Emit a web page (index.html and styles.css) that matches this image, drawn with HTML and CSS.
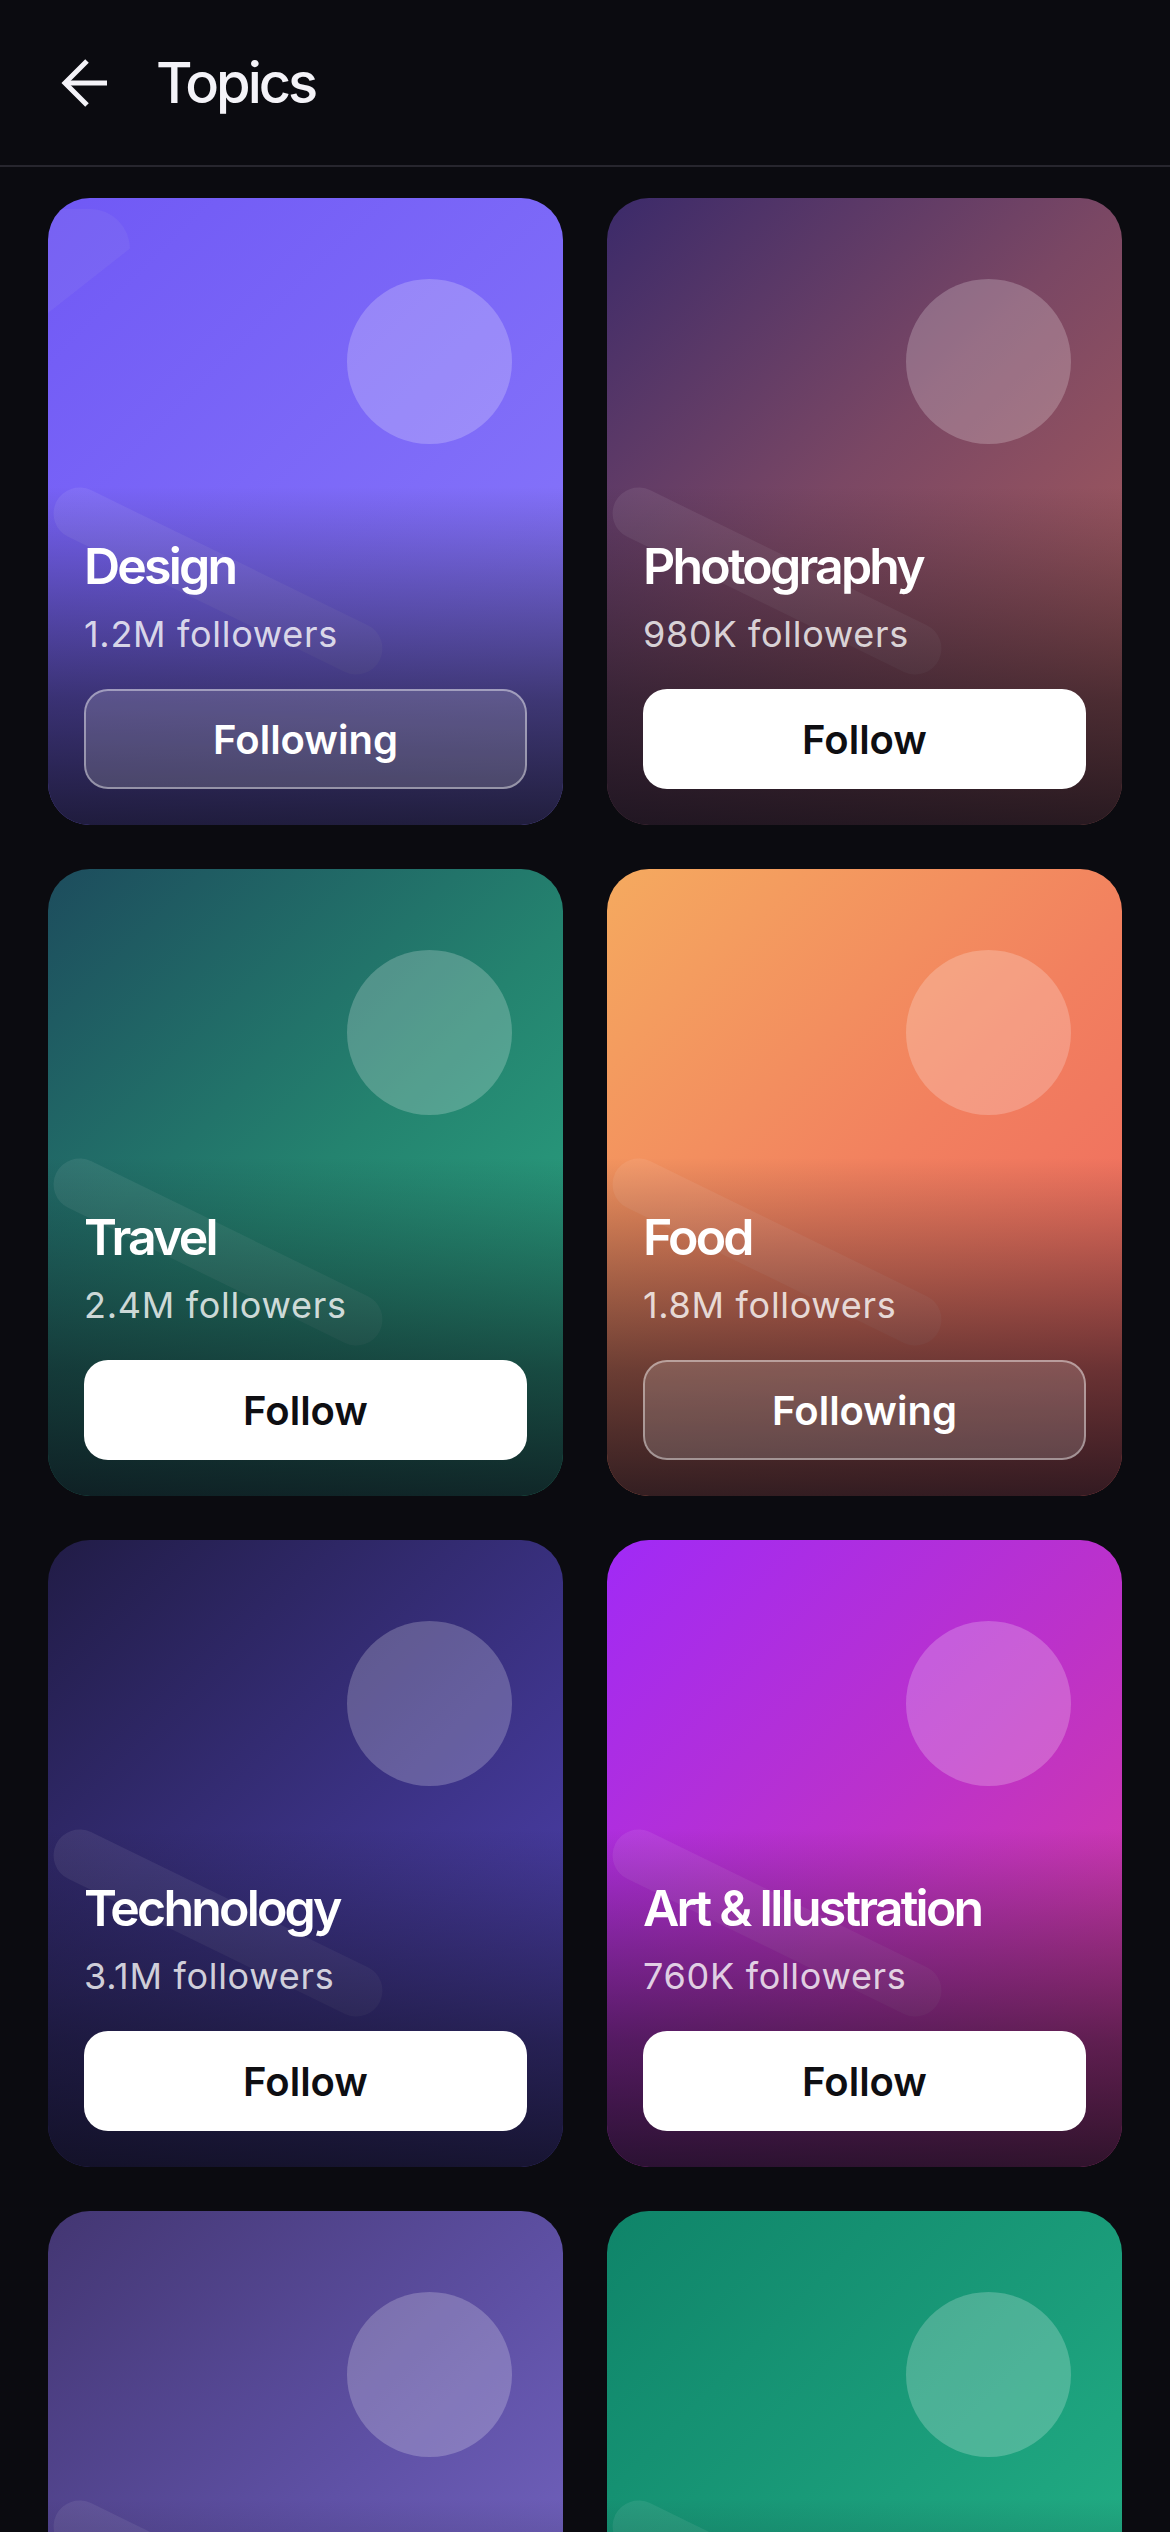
FILE: index.html
```html
<!DOCTYPE html>
<html lang="en">
<head>
    <meta charset="UTF-8">
    <meta name="viewport" content="width=device-width, initial-scale=1.0">
    <title>Topics</title>
    <link rel="stylesheet" href="styles.css">
</head>
<body>

    <header class="top-bar">
        <button class="back-button" aria-label="Back">
            <svg width="48" height="48" viewBox="0 0 48 48" fill="none" stroke="#f4f3f8" stroke-width="5" stroke-linejoin="miter">
                <path d="M47 24 H5"/>
                <path d="M27 2 L5 24 L27 46"/>
            </svg>
        </button>
        <h1 class="page-title">Topics</h1>
    </header>

    <main class="topic-grid">
        <div class="topic-card card-design">
            <span class="deco-corner"></span>
            <span class="deco-circle"></span>
            <span class="deco-pill"></span>
            <div class="card-body">
                <h2 class="topic-name">Design</h2>
                <p class="topic-count">1.2M followers</p>
                <button class="follow-btn following">Following</button>
            </div>
        </div>

        <div class="topic-card card-photo">
            <span class="deco-circle"></span>
            <span class="deco-pill"></span>
            <div class="card-body">
                <h2 class="topic-name">Photography</h2>
                <p class="topic-count">980K followers</p>
                <button class="follow-btn">Follow</button>
            </div>
        </div>

        <div class="topic-card card-travel">
            <span class="deco-circle"></span>
            <span class="deco-pill"></span>
            <div class="card-body">
                <h2 class="topic-name">Travel</h2>
                <p class="topic-count">2.4M followers</p>
                <button class="follow-btn">Follow</button>
            </div>
        </div>

        <div class="topic-card card-food">
            <span class="deco-circle"></span>
            <span class="deco-pill"></span>
            <div class="card-body">
                <h2 class="topic-name">Food</h2>
                <p class="topic-count">1.8M followers</p>
                <button class="follow-btn following">Following</button>
            </div>
        </div>

        <div class="topic-card card-tech">
            <span class="deco-circle"></span>
            <span class="deco-pill"></span>
            <div class="card-body">
                <h2 class="topic-name">Technology</h2>
                <p class="topic-count">3.1M followers</p>
                <button class="follow-btn">Follow</button>
            </div>
        </div>

        <div class="topic-card card-art">
            <span class="deco-circle"></span>
            <span class="deco-pill"></span>
            <div class="card-body">
                <h2 class="topic-name">Art &amp; Illustration</h2>
                <p class="topic-count">760K followers</p>
                <button class="follow-btn">Follow</button>
            </div>
        </div>

        <div class="topic-card card-music">
            <span class="deco-circle"></span>
            <span class="deco-pill"></span>
        </div>

        <div class="topic-card card-nature">
            <span class="deco-circle"></span>
            <span class="deco-pill"></span>
        </div>
    </main>

</body>
</html>
```

FILE: styles.css
```css
body {
    margin: 0;
    padding: 0;
    background: #0b0b10;
    color: #f4f3f8;
    font-family: "Inter", "Noto Sans", sans-serif;
}

/* Header */
.top-bar {
    display: flex;
    align-items: center;
    height: 165px;
    padding-left: 60px;
    border-bottom: 2px solid #27262e;
}

.back-button {
    display: flex;
    padding: 0;
    background: none;
    border: none;
    cursor: pointer;
}

.page-title {
    margin: 0 0 0 48px;
    font-size: 56px;
    font-weight: 500;
    letter-spacing: -3px;
    color: #f4f3f8;
}

/* Grid */
.topic-grid {
    display: grid;
    grid-template-columns: 1fr 1fr;
    gap: 44px;
    padding: 31px 48px 48px;
}

.topic-card {
    position: relative;
    overflow: hidden;
    height: 627px;
    border-radius: 42px;
    display: flex;
    flex-direction: column;
    justify-content: flex-end;
    padding: 36px;
    box-sizing: border-box;
}

/* darkening toward the bottom */
.topic-card::after {
    content: "";
    position: absolute;
    inset: 0;
    background: linear-gradient(180deg,
        rgba(10, 10, 20, 0) 46%,
        rgba(10, 10, 20, 0.28) 62%,
        rgba(10, 10, 20, 0.58) 80%,
        rgba(10, 10, 20, 0.82) 100%);
    z-index: 1;
}

.deco-circle {
    position: absolute;
    top: 81px;
    right: 51px;
    width: 165px;
    height: 165px;
    border-radius: 50%;
    background: rgba(255, 255, 255, 0.22);
}

.deco-pill {
    position: absolute;
    left: -10px;
    top: 357px;
    width: 360px;
    height: 52px;
    border-radius: 26px;
    background: rgba(255, 255, 255, 0.08);
    transform: rotate(26deg);
}

.deco-corner {
    position: absolute;
    left: 0;
    top: 11px;
    width: 82px;
    height: 104px;
    border-top-right-radius: 40px;
    background: rgba(210, 210, 230, 0.07);
    clip-path: polygon(0 0, 100% 0, 100% 38%, 0 100%);
}

.card-body {
    position: relative;
    z-index: 2;
    display: flex;
    flex-direction: column;
}

.topic-name {
    margin: 0;
    font-size: 50px;
    line-height: 60px;
    font-weight: 600;
    letter-spacing: -2.8px;
    color: #ffffff;
    white-space: nowrap;
}

.topic-count {
    margin: 16px 0 0;
    font-size: 36px;
    line-height: 44px;
    letter-spacing: 0.7px;
    color: rgba(255, 255, 255, 0.8);
}

.follow-btn {
    margin-top: 33px;
    height: 100px;
    width: 100%;
    border: none;
    border-radius: 24px;
    background: #ffffff;
    color: #0e0e12;
    font-family: "Inter", "Noto Sans", sans-serif;
    font-size: 40px;
    font-weight: 600;
    cursor: pointer;
}

.follow-btn.following {
    background: rgba(255, 255, 255, 0.16);
    border: 2px solid rgba(255, 255, 255, 0.42);
    color: #ffffff;
}

/* Card colours */
.card-design { background: linear-gradient(135deg, #7059f5 0%, #8a7afb 100%); }
.card-photo  { background: linear-gradient(135deg, #3b2a6a 0%, #7a4764 45%, #b4615a 100%); }
.card-travel { background: linear-gradient(135deg, #1d4c5d 0%, #24836f 50%, #2cad86 100%); }
.card-food   { background: linear-gradient(135deg, #f5aa5f 0%, #f2805f 50%, #ee625f 100%); }
.card-tech   { background: linear-gradient(135deg, #211c46 0%, #3a3182 50%, #5445bb 100%); }
.card-art    { background: linear-gradient(135deg, #a02af6 0%, #bd32c8 50%, #dd3d98 100%); }
.card-music  { background: linear-gradient(135deg, #433672 0%, #5f51a6 50%, #7e6ece 100%); }
.card-nature { background: linear-gradient(135deg, #0f8469 0%, #1b9e7b 50%, #27ba8b 100%); }
```
